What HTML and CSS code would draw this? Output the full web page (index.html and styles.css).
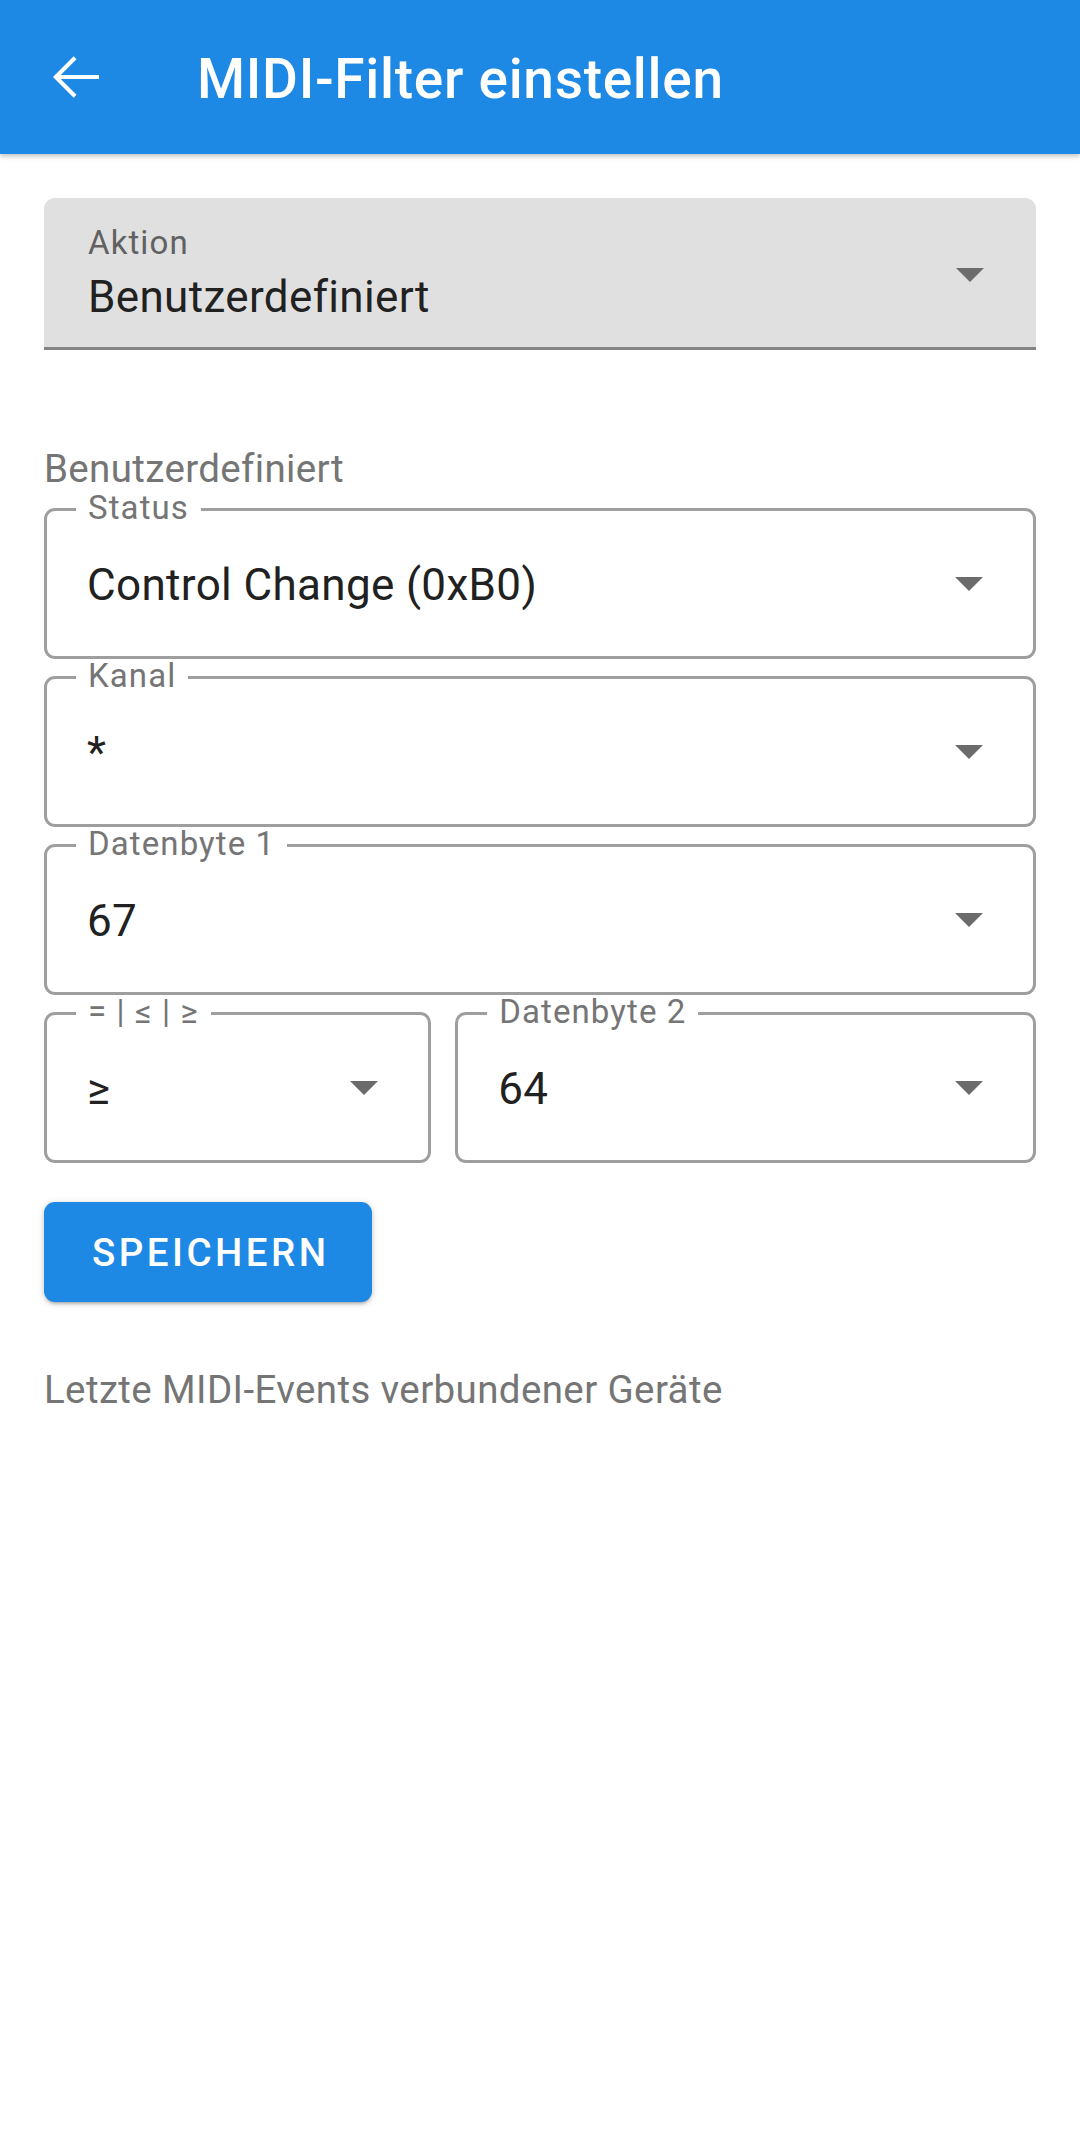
FILE: index.html
```html
<!DOCTYPE html>
<html lang="de">
<head>
<meta charset="utf-8">
<title>MIDI-Filter einstellen</title>
<link rel="stylesheet" href="styles.css">
</head>
<body>
<header class="appbar">
  <div class="appbar-icon">
    <svg width="66" height="66" viewBox="0 0 24 24" aria-hidden="true">
      <path d="M20 12H4.6M11.3 5L4.3 12l7 7" fill="none" stroke="#fff" stroke-width="1.45" stroke-linejoin="miter"/>
    </svg>
  </div>
  <h1 class="appbar-title">MIDI-Filter einstellen</h1>
</header>

<main class="content">
  <div class="filled-field">
    <div class="filled-text">
      <div class="filled-label">Aktion</div>
      <div class="filled-value">Benutzerdefiniert</div>
    </div>
    <svg class="dd-arrow filled-arrow" width="28" height="14" viewBox="0 0 28 14"><polygon points="0,0 28,0 14,14"/></svg>
  </div>

  <div class="section-label">Benutzerdefiniert</div>

  <div class="outlined-field">
    <span class="o-label">Status</span>
    <span class="o-value">Control Change (0xB0)</span>
    <svg class="dd-arrow" width="28" height="14" viewBox="0 0 28 14"><polygon points="0,0 28,0 14,14"/></svg>
  </div>

  <div class="outlined-field">
    <span class="o-label">Kanal</span>
    <span class="o-value">*</span>
    <svg class="dd-arrow" width="28" height="14" viewBox="0 0 28 14"><polygon points="0,0 28,0 14,14"/></svg>
  </div>

  <div class="outlined-field">
    <span class="o-label">Datenbyte 1</span>
    <span class="o-value">67</span>
    <svg class="dd-arrow" width="28" height="14" viewBox="0 0 28 14"><polygon points="0,0 28,0 14,14"/></svg>
  </div>

  <div class="field-row">
    <div class="outlined-field">
      <span class="o-label">= | ≤ | ≥</span>
      <span class="o-value">≥</span>
      <svg class="dd-arrow" width="28" height="14" viewBox="0 0 28 14"><polygon points="0,0 28,0 14,14"/></svg>
    </div>
    <div class="outlined-field">
      <span class="o-label">Datenbyte 2</span>
      <span class="o-value">64</span>
      <svg class="dd-arrow" width="28" height="14" viewBox="0 0 28 14"><polygon points="0,0 28,0 14,14"/></svg>
    </div>
  </div>

  <button class="save-btn" type="button">SPEICHERN</button>

  <div class="events-label">Letzte MIDI-Events verbundener Geräte</div>
</main>
</body>
</html>
```

FILE: styles.css
```css
* { box-sizing: border-box; }

html, body {
  margin: 0;
  padding: 0;
  background: #ffffff;
  font-family: Roboto, "Noto Sans", "Liberation Sans", sans-serif;
  color: #212121;
}

.appbar {
  height: 154px;
  background: #1E88E5;
  display: flex;
  align-items: center;
  padding-left: 44px;
  box-shadow: 0 2px 4px rgba(0,0,0,0.18), 0 4px 6px rgba(0,0,0,0.06);
  position: relative;
}

.appbar-icon {
  width: 66px;
  height: 66px;
  display: flex;
}

.appbar-title {
  margin: 0 0 0 87px;
  font-size: 55px;
  font-weight: 500;
  color: #ffffff;
  line-height: 64px;
  padding-top: 4px;
  letter-spacing: 0.7px;
}

.content {
  padding: 44px 44px 0 44px;
}

/* Filled select */
.filled-field {
  height: 152px;
  background: #E0E0E0;
  border-radius: 11px 11px 0 0;
  border-bottom: 3px solid #858585;
  display: flex;
  align-items: center;
  padding-left: 44px;
}

.filled-text {
  flex: 1;
  display: flex;
  flex-direction: column;
}

.filled-label {
  font-size: 33px;
  line-height: 40px;
  color: #616161;
  letter-spacing: 1.1px;
}

.filled-value {
  margin-top: 8px;
  font-size: 44px;
  line-height: 52px;
  color: #212121;
  letter-spacing: 0.35px;
}

.dd-arrow {
  flex: none;
  margin-right: 50px;
  fill: #6b6b6b;
}

.filled-arrow {
  margin-top: 5px;
  margin-right: 52px;
}

.section-label {
  margin-top: 96px;
  font-size: 38.5px;
  line-height: 45px;
  color: #757575;
  letter-spacing: 0.35px;
}

/* Outlined select */
.outlined-field {
  position: relative;
  height: 151px;
  border: 3px solid #9E9E9E;
  border-radius: 11px;
  display: flex;
  align-items: center;
  padding-left: 40px;
  margin-top: 17px;
}

.o-label {
  position: absolute;
  left: 29px;
  top: -20px;
  padding: 0 12px;
  background: #ffffff;
  font-size: 33px;
  line-height: 34px;
  color: #757575;
  letter-spacing: 1.1px;
}

.o-value {
  flex: 1;
  font-size: 44px;
  line-height: 52px;
  color: #212121;
  padding-top: 2px;
  letter-spacing: 0.35px;
}

.field-row {
  display: grid;
  grid-template-columns: 2fr 3fr;
  column-gap: 24px;
  margin-top: 17px;
}

.field-row .outlined-field {
  margin-top: 0;
}

.save-btn {
  display: block;
  margin-top: 39px;
  height: 100px;
  padding: 0 43px 0 48px;
  border: none;
  border-radius: 11px;
  background: #1E88E5;
  color: #ffffff;
  font-family: Roboto, "Noto Sans", "Liberation Sans", sans-serif;
  font-size: 38.5px;
  font-weight: 500;
  letter-spacing: 0.09em;
  box-shadow: 0 3px 3px -2px rgba(0,0,0,0.2), 0 2px 4px rgba(0,0,0,0.14), 0 1px 8px rgba(0,0,0,0.12);
}

.events-label {
  margin-top: 65px;
  font-size: 38.5px;
  line-height: 45px;
  color: #757575;
  letter-spacing: 0.38px;
}
```
